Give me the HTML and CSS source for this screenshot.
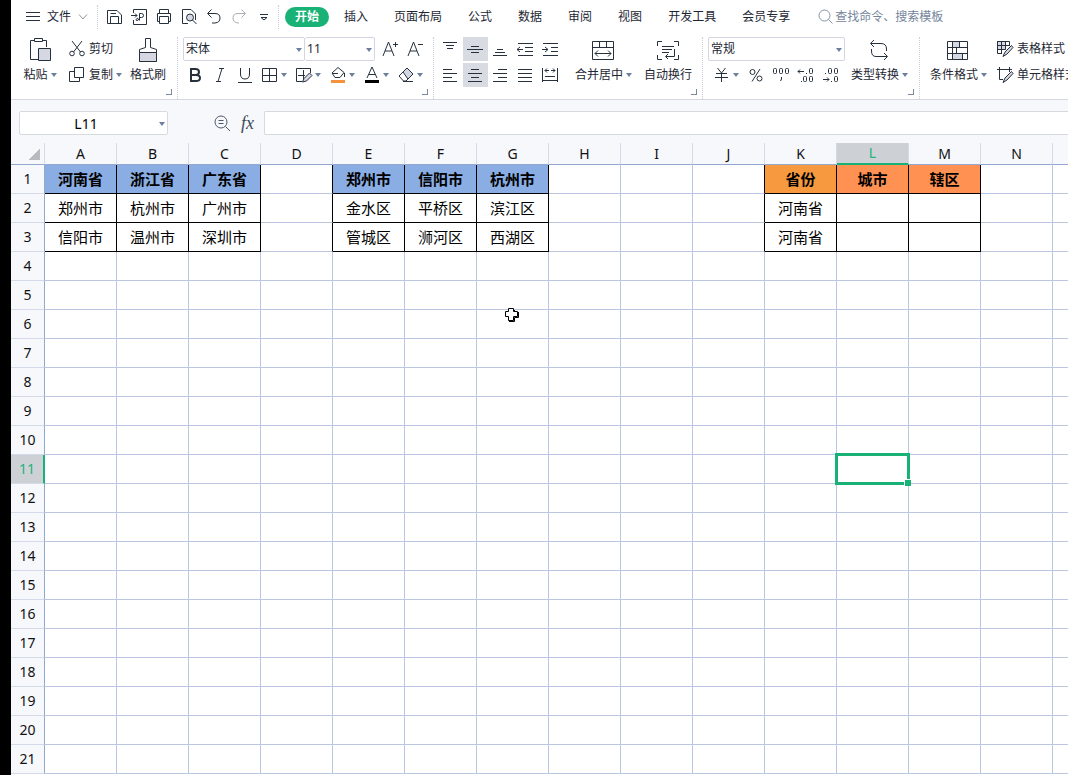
FILE: index.html
```html
<!DOCTYPE html>
<html lang="zh-CN">
<head>
<meta charset="utf-8">
<title>L11</title>
<link rel="stylesheet" href="styles.css">
</head>
<body>
<div class="app">
  <header class="menubar">
    <button class="file"><svg class="ic" width="14" height="15"><path d="M0 3.500H14M0 7.500H14M0 11.500H14"/></svg>文件<svg class="ic soft" width="10" height="8"><path d="M1 1.500L5 6L9 1.500"/></svg></button>
    <div class="quick">
      <button aria-label="保存"><svg class="ic" width="16" height="16"><path d="M1.500 1.500H11L15.500 6V14.500H1.500ZM4.500 14.500V7.500H12.500V14.500M4.500 4.500H10"/></svg></button>
      <button aria-label="输出PDF"><svg class="ic" width="16" height="16"><path d="M2.500 4V.500H15.500V15.500H2.500V11M0 6.500H6M4 4.500L6 6.500L4 8.500M8.500 11.500V4.500H10.500Q12.500 4.500 12.500 6.500T10.500 8.500H8.500M8.500 9Q7.500 12 5.500 11.500T7 9"/></svg></button>
      <button aria-label="打印"><svg class="ic" width="16" height="16"><path d="M3.500 4V.500H12.500V4M3.500 12.500H1.500V4.500H14.500V12.500H12.500M3.500 7.500H12.500V14.500H3.500Z"/></svg></button>
      <button aria-label="打印预览"><svg class="ic" width="16" height="16"><path d="M7 14.500H1.500V.500H10L14.500 5V11"/><circle class="shade" cx="9" cy="8.500" r="3.500"/><path d="M11.500 11L15.500 15"/></svg></button>
      <button aria-label="撤销"><svg class="ic" width="16" height="16"><path d="M5.500 .500L1.500 4.500L5.500 8.500M2 4.500H9Q14 4.500 14 9T9 14H6"/></svg></button>
      <button aria-label="恢复"><svg class="ic pale" width="16" height="16"><path d="M10.500 .500L14.500 4.500L10.500 8.500M14 4.500H7Q2 4.500 2 9T7 14H8"/></svg></button>
      <button aria-label="更多"><svg class="ic" width="16" height="16"><path d="M4 5.500H12M5 8.500L8 11L11 8.500Z"/></svg></button>
    </div>
    <nav class="tabs">
      <button class="tab on">开始</button><button class="tab">插入</button><button class="tab">页面布局</button><button class="tab">公式</button><button class="tab">数据</button><button class="tab">审阅</button><button class="tab">视图</button><button class="tab">开发工具</button><button class="tab">会员专享</button>
    </nav>
    <label class="search"><svg class="ic" width="15" height="15"><circle cx="6.500" cy="6.500" r="5.500"/><path d="M10.500 10.500L14.500 14.500"/></svg><input type="text" aria-label="查找" placeholder="查找命令、搜索模板"></label>
  </header>

  <div class="ribbon">
    <section class="group clip corner">
      <button class="big paste"><span class="pic"><svg class="ic" width="22" height="24"><path d="M5 2.500H1.500V21.500H9M13 2.500H17.500V9"/><path d="M5.500 .500H13.500V3.500H5.500Z"/><path class="shade" d="M9.500 10.500H21.500V22.500H9.500Z"/></svg></span><span class="cap">粘贴<i class="arr"></i></span></button>
      <div class="stack">
        <button class="line"><svg class="ic" width="16" height="16"><circle cx="3" cy="12.500" r="2.300"/><circle cx="13" cy="12.500" r="2.300"/><path d="M4.500 11L13 0M11.500 11L3 0"/></svg>剪切</button>
        <button class="line"><svg class="ic" width="16" height="16"><path d="M5.500 .500H14.500V10.500H5.500ZM5 4.500H.500V14.500H10.500V11"/></svg>复制<i class="arr"></i></button>
      </div>
      <button class="big"><span class="pic"><svg class="ic" width="20" height="24"><path d="M7.500 .500H12.500V9.500L18.500 11.500V23.500H1.500V11.500L7.500 9.500Z"/><path class="shade" d="M1.500 14.500H18.500V23.500H1.500Z"/></svg></span><span class="cap">格式刷</span></button>
    </section>

    <section class="group font corner">
      <div class="stack">
        <div class="row">
          <span class="combo family"><select aria-label="字体"><option>宋体</option></select></span><span class="combo size"><select aria-label="字号"><option>11</option></select></span>
          <button class="tool" aria-label="增大字号"><svg class="ic" width="16" height="18"><path d="M1 16L6.500 2L12 16M3 11H10M11 4.500H16M13.500 2V7"/></svg></button><button class="tool" aria-label="减小字号"><svg class="ic" width="16" height="18"><path d="M1 16L6.500 2L12 16M3 11H10M11 4.500H16"/></svg></button>
        </div>
        <div class="row">
          <button class="tool" aria-label="加粗"><svg class="ic heavy" width="14" height="16"><path d="M3 2H7.500Q11 2 11 5T7.500 8H3ZM3 8H8Q12 8 12 11T8 14H3Z"/></svg></button><button class="tool" aria-label="倾斜"><svg class="ic" width="14" height="16"><path d="M6 1.500H11M3 14.500H8M9 1.500L5 14.500"/></svg></button><button class="tool" aria-label="下划线"><svg class="ic" width="16" height="16"><path d="M3.500 1V7Q3.500 12 8 12T12.500 7V1M1 15.500H15"/></svg></button>
          <button class="tool split" aria-label="边框"><svg class="ic" width="16" height="16"><path d="M.500 1.500H14.500V14.500H.500ZM7.500 1.500V14.500M.500 8.500H14.500"/></svg><i class="arr"></i></button>
          <button class="tool split" aria-label="绘制表格"><svg class="ic" width="16" height="16"><path d="M14.500 6V1.500H.500V14.500H6M2 8.500H9M7.500 3V13" /><path class="shade" d="M6.500 15L8 11.500L13.500 6L16 8.500L10.500 14Z"/></svg><i class="arr"></i></button>
          <button class="tool split" aria-label="填充颜色"><svg class="ic" width="16" height="16"><path d="M2 6L8 .500L14 5.500L10 10.500H5ZM2 6.500H8M14.500 6V10"/><path class="swatch" d="M1 13H15V16H1Z"/></svg><i class="arr"></i></button>
          <button class="tool split" aria-label="字体颜色"><svg class="ic" width="16" height="16"><path d="M3 11L8 0L13 11M5 7.500H11"/><path class="ink" d="M1 13H15V16H1Z"/></svg><i class="arr"></i></button>
          <button class="tool split" aria-label="清除"><svg class="ic" width="16" height="16"><path class="shade" d="M5 5L9 1L15 7L10 12Z"/><path d="M5 5L1 9L5.500 14H8L10 12M5 14.500H15"/></svg><i class="arr"></i></button>
        </div>
      </div>
    </section>

    <section class="group align corner">
      <div class="stack">
        <div class="row">
          <button class="tool" aria-label="顶端对齐"><svg class="ic" width="16" height="16"><path d="M1 1.500H15M4 4.500H12M5 7.500H11"/></svg></button><button class="tool on" aria-label="垂直居中"><svg class="ic" width="16" height="16"><path d="M4 5.500H12M0 8.500H16M4 11.500H12"/></svg></button><button class="tool" aria-label="底端对齐"><svg class="ic" width="16" height="16"><path d="M5 8.500H11M3 11.500H13M1 14.500H15"/></svg></button><button class="tool" aria-label="减少缩进"><svg class="ic" width="16" height="16"><path d="M1 2.500H16M8 6.500H16M8 10.500H16M1 14.500H16M0 8.500H6M3 6L0 8.500L3 11"/></svg></button><button class="tool" aria-label="增加缩进"><svg class="ic" width="16" height="16"><path d="M1 2.500H16M9 6.500H16M9 10.500H16M1 14.500H16M0 8.500H6M3 6L6 8.500L3 11"/></svg></button>
        </div>
        <div class="row">
          <button class="tool" aria-label="左对齐"><svg class="ic" width="16" height="16"><path d="M1 2.500H10M1 6.500H15M1 10.500H10M1 14.500H15"/></svg></button><button class="tool on" aria-label="水平居中"><svg class="ic" width="16" height="16"><path d="M4 2.500H12M1 6.500H15M4 10.500H12M1 14.500H15"/></svg></button><button class="tool" aria-label="右对齐"><svg class="ic" width="16" height="16"><path d="M6 2.500H15M1 6.500H15M6 10.500H15M1 14.500H15"/></svg></button><button class="tool" aria-label="两端对齐"><svg class="ic" width="16" height="16"><path d="M1 2.500H15M1 6.500H15M1 10.500H15M1 14.500H15"/></svg></button><button class="tool" aria-label="分散对齐"><svg class="ic" width="16" height="16"><path d="M.500 1V15M15.500 1V15M3 3.500H7M9 3.500H13M5 1.500L3 3.500L5 5.500M11 1.500L13 3.500L11 5.500M3 9.500H13M1 13.500H15"/></svg></button>
        </div>
      </div>
      <button class="big"><span class="pic"><svg class="ic" width="23" height="20"><path d="M.500 1.500H21.500V19.500H.500ZM.500 7.500H21.500M7.500 1.500V7.500M14.500 1.500V7.500M3 13.500H19M6 10.500L3 13.500L6 16.500M16 10.500L19 13.500L16 16.500"/></svg></span><span class="cap">合并居中<i class="arr"></i></span></button>
      <button class="big"><span class="pic"><svg class="ic" width="22" height="20"><path d="M5 1.500H.500V6M17 1.500H21.500V6M.500 15V19.500H5M21.500 15V19.500H17M5 6.500H17M5 9.500H15M5 12.500H12M17.500 9V16.500H9M11 14L8.500 16.500L11 19"/></svg></span><span class="cap">自动换行</span></button>
    </section>

    <section class="group number corner">
      <div class="stack">
        <span class="combo format"><select aria-label="数字格式"><option>常规</option></select></span>
        <div class="row nums">
          <button class="tool split" aria-label="货币"><svg class="ic" width="16" height="16"><path d="M3.500 1L7.500 6L11.500 1M2 6.500H13M1 10.500H14M7.500 6V15"/></svg><i class="arr"></i></button><button class="tool" aria-label="百分比"><svg class="ic" width="14" height="16"><circle cx="3.500" cy="5" r="2.500"/><circle cx="10.500" cy="11.500" r="2.500"/><path d="M11 2L3 14.500"/></svg></button><button class="tool" aria-label="千位分隔"><svg class="ic" width="18" height="16"><rect x="1.500" y="1.500" width="3" height="5" rx="1"/><rect x="7.500" y="1.500" width="3" height="5" rx="1"/><rect x="13.500" y="1.500" width="3" height="5" rx="1"/><path d="M9.500 10V12L8.500 14"/></svg></button><button class="tool" aria-label="增加小数位"><svg class="ic" width="18" height="16"><path d="M1 4.500H7M3 2.500L1 4.500L3 6.500M9 6.500H10M4 14.500H5"/><rect x="12.500" y="1.500" width="3" height="5" rx="1"/><rect x="6.500" y="9.500" width="3" height="5" rx="1"/><rect x="12.500" y="9.500" width="3" height="5" rx="1"/></svg></button><button class="tool" aria-label="减少小数位"><svg class="ic" width="18" height="16"><path d="M1 12.500H7M5 10.500L7 12.500L5 14.500M9 14.500H10M3 6.500H4"/><rect x="12.500" y="9.500" width="3" height="5" rx="1"/><rect x="6.500" y="1.500" width="3" height="5" rx="1"/><rect x="12.500" y="1.500" width="3" height="5" rx="1"/></svg></button>
        </div>
      </div>
      <button class="big"><span class="pic"><svg class="ic" width="21" height="22"><path d="M5 1L1.500 4.500L5 8M2 4.500H12Q17.500 4.500 17.500 10V12M15 14L18.500 17.500L15 21M18 17.500H7Q2.500 17.500 2.500 12V10"/></svg></span><span class="cap">类型转换<i class="arr"></i></span></button>
    </section>

    <section class="group styles">
      <button class="big"><span class="pic"><svg class="ic" width="23" height="20"><path class="shade" d="M5.500 1.500H12.500V7.500H5.500ZM5.500 13.500H15.500V19.500H5.500Z"/><path d="M.500 1.500H20.500V19.500H.500ZM.500 7.500H20.500M.500 13.500H20.500M5.500 1.500V19.500M12.500 1.500V7.500M9.500 7.500V13.500M15.500 13.500V19.500"/></svg></span><span class="cap">条件格式<i class="arr"></i></span></button>
      <div class="stack">
        <button class="line"><svg class="ic" width="16" height="16"><path class="shade" d="M.500 .500H8.500V8.500H.500Z"/><path d="M.500 .500H12.500V5M.500 .500V12.500H5M.500 4.500H12.500M.500 8.500H8M4.500 .500V12.500M8.500 .500V8"/><path class="shade" d="M8 11L14.500 4.500L16 6.500L10 13L6 15.500Z"/></svg>表格样式</button>
        <button class="line"><svg class="ic" width="16" height="16"><path d="M0 2.500H15M2.500 0V12.500H6M12.500 0V5"/><path class="shade" d="M8 11L14.500 4.500L16 6.500L10 13L6 15.500Z"/></svg>单元格样式</button>
      </div>
    </section>
  </div>

  <div class="formula">
    <span class="namebox"><input type="text" aria-label="名称框" value="L11"></span>
    <button class="look" aria-label="浏览公式结果"><svg class="ic" width="17" height="17"><circle cx="7" cy="7" r="6"/><path d="M11.500 11.500L16 16M4.500 5.500H9.500M4.500 8.500H9.500"/></svg></button>
    <button class="fx">fx</button>
    <input class="edit" type="text" aria-label="编辑栏">
  </div>

  <main class="sheet">
    <table class="grid">
      <colgroup><col class="rowcol"><col class="c" span="14"><col></colgroup>
      <thead><tr><th class="all"></th><th>A</th><th>B</th><th>C</th><th>D</th><th>E</th><th>F</th><th>G</th><th>H</th><th>I</th><th>J</th><th>K</th><th class="cur">L</th><th>M</th><th>N</th><th></th></tr></thead>
      <tbody>
        <tr><th>1</th><td class="k blue">河南省</td><td class="k blue">浙江省</td><td class="k blue">广东省</td><td class="edge"></td><td class="k blue">郑州市</td><td class="k blue">信阳市</td><td class="k blue">杭州市</td><td></td><td></td><td class="edge"></td><td class="k gold">省份</td><td class="k orange">城市</td><td class="k orange">辖区</td><td></td><td></td></tr>
        <tr><th>2</th><td class="k">郑州市</td><td class="k">杭州市</td><td class="k">广州市</td><td class="edge"></td><td class="k">金水区</td><td class="k">平桥区</td><td class="k">滨江区</td><td></td><td></td><td class="edge"></td><td class="k">河南省</td><td class="k"></td><td class="k"></td><td></td><td></td></tr>
        <tr><th>3</th><td class="k">信阳市</td><td class="k">温州市</td><td class="k">深圳市</td><td class="edge"></td><td class="k">管城区</td><td class="k">浉河区</td><td class="k">西湖区</td><td></td><td></td><td class="edge"></td><td class="k">河南省</td><td class="k"></td><td class="k"></td><td></td><td></td></tr>
        <tr><th>4<td><td><td><td><td><td><td><td><td><td><td><td><td><td><td></tr>
        <tr><th>5<td><td><td><td><td><td><td><td><td><td><td><td><td><td><td></tr>
        <tr><th>6<td><td><td><td><td><td><td class="host"><svg class="pointer" width="15" height="15"><path d="M4.500 1.500H9.500V4.500H13.500V9.500H9.500V13.500H4.500V9.500H1.500V4.500H4.500Z"/><path d="M10.500 3V4M14.500 5V10.500H10.500V14.500H5"/></svg><td><td><td><td><td><td><td><td></tr>
        <tr><th>7<td><td><td><td><td><td><td><td><td><td><td><td><td><td><td></tr>
        <tr><th>8<td><td><td><td><td><td><td><td><td><td><td><td><td><td><td></tr>
        <tr><th>9<td><td><td><td><td><td><td><td><td><td><td><td><td><td><td></tr>
        <tr><th>10<td><td><td><td><td><td><td><td><td><td><td><td><td><td><td></tr>
        <tr><th class="cur">11<td><td><td><td><td><td><td><td><td><td><td><td class="host"><span class="selection"></span><td><td><td></tr>
        <tr><th>12<td><td><td><td><td><td><td><td><td><td><td><td><td><td><td></tr>
        <tr><th>13<td><td><td><td><td><td><td><td><td><td><td><td><td><td><td></tr>
        <tr><th>14<td><td><td><td><td><td><td><td><td><td><td><td><td><td><td></tr>
        <tr><th>15<td><td><td><td><td><td><td><td><td><td><td><td><td><td><td></tr>
        <tr><th>16<td><td><td><td><td><td><td><td><td><td><td><td><td><td><td></tr>
        <tr><th>17<td><td><td><td><td><td><td><td><td><td><td><td><td><td><td></tr>
        <tr><th>18<td><td><td><td><td><td><td><td><td><td><td><td><td><td><td></tr>
        <tr><th>19<td><td><td><td><td><td><td><td><td><td><td><td><td><td><td></tr>
        <tr><th>20<td><td><td><td><td><td><td><td><td><td><td><td><td><td><td></tr>
        <tr><th>21<td><td><td><td><td><td><td><td><td><td><td><td><td><td><td></tr>
      </tbody>
    </table>
  </main>
</div>
</body>
</html>
```
FILE: styles.css
```css
* { box-sizing: border-box; }
body {
  margin: 0;
  background: #fff;
  color: #1d2733;
  font: 12px/20px "Noto Sans", "Noto Sans CJK SC", sans-serif;
}
button, input, select {
  margin: 0;
  padding: 0;
  border: 0;
  background: none;
  color: inherit;
  font: inherit;
}
button { flex: none; white-space: nowrap; }
.app {
  min-height: 100vh;
  border-left: 11px solid #000;
  overflow: hidden;
}

/* icons */
.ic { display: block; flex: none; overflow: visible; fill: none; stroke: #26313d; stroke-width: 1; }
.ic .shade { fill: #d5d8e2; }
.ic .swatch { fill: #f5923e; stroke: none; }
.ic .ink { fill: #000; stroke: none; }
.ic.heavy { stroke-width: 2; }
.ic.pale { stroke: #a9afb5; }
.ic.soft { stroke: #8c9a94; }
.arr {
  flex: none;
  width: 6px;
  margin-left: 3px;
  border: 3px solid transparent;
  border-top: 4px solid #6c7f9d;
  border-bottom: 0;
}

/* menu bar */
.menubar { display: flex; align-items: center; height: 33px; padding-left: 15px; }
.file { display: flex; align-items: center; gap: 7px; padding-right: 9px; }
.quick {
  display: flex;
  height: 24px;
  padding: 0 1px 0 4px;
  border: dotted #c9ccdb;
  border-width: 0 1px;
}
.quick button { display: flex; align-items: center; justify-content: center; width: 25px; padding-right: 1px; }
.tabs { display: flex; margin-left: 6px; }
.tab { padding: 0 13px; }
.tab.on { margin-right: 2px; padding: 0 10px; border-radius: 10px; background: #18b277; color: #fff; font-weight: 700; }
.search { display: flex; align-items: center; gap: 2px; margin-left: 15px; }
.search .ic { stroke: #8493a6; }
.search input { width: 120px; }
.search input::placeholder { color: #75859b; opacity: 1; }

/* ribbon */
.ribbon { display: flex; height: 67px; padding-top: 4px; border-bottom: 1px solid #d6d7df; }
.group { display: flex; flex: none; position: relative; border-right: 1px dotted #c9ccdb; }
.corner::after {
  content: "";
  position: absolute;
  right: 5px;
  bottom: 4px;
  width: 5px;
  height: 5px;
  border: solid #7b899b;
  border-width: 0 1px 1px 0;
}
.clip { gap: 8px; padding: 0 11px 0 8px; }
.font { padding: 0 5px; }
.align { gap: 12px; padding: 0 10px 0 4px; }
.number { gap: 6px; padding: 0 11px 0 5px; }
.styles { gap: 10px; padding-left: 10px; border-right: 0; }
.stack { display: flex; flex-direction: column; gap: 2px; }
.row { display: flex; height: 24px; }
.nums { padding-left: 2px; }
.big { display: flex; flex-direction: column; align-items: center; height: 50px; }
.paste { width: 42px; }
.pic { display: flex; align-items: center; height: 28px; }
.cap { display: flex; align-items: center; height: 24px; }
.line { display: flex; align-items: center; height: 24px; }
.line .ic { margin-right: 4px; }
.tool { display: flex; align-items: center; justify-content: center; width: 25px; height: 24px; padding-right: 1px; }
.tool.on { background: #d8dbe2; }
.split { width: 34px; }
.combo { display: block; position: relative; height: 24px; border: 1px solid #d3d5e2; border-radius: 2px; }
.combo select { width: 100%; height: 22px; padding-left: 2px; appearance: none; }
.combo::after, .namebox::after {
  content: "";
  position: absolute;
  right: 2px;
  top: 10px;
  border: 3px solid transparent;
  border-top: 4px solid #6c7f9d;
  border-bottom: 0;
}
.family { width: 122px; }
.size { width: 70px; margin-right: 3px; border-left: 0; }
.format { width: 137px; }

/* formula bar */
.formula { display: flex; align-items: center; height: 43px; padding: 3px 0 0 8px; background: #f7f8fc; }
.namebox { position: relative; width: 149px; height: 24px; margin-right: 46px; border: 1px solid #d6dade; border-radius: 2px; background: #fff; }
.namebox input { width: 100%; height: 22px; padding-right: 15px; color: #000; font-size: 14px; text-align: center; }
.look { width: 17px; }
.look .ic { stroke: #4d5b6b; }
.fx { width: 33px; margin-right: 0; color: #3d4a58; font: italic 18px/20px "Liberation Serif", serif; }
.edit { flex: 1; height: 24px; border: 1px solid #d6dade; border-right: 0; border-radius: 2px 0 0 2px; background: #fff; }

/* sheet */
.grid { width: 100%; min-width: 1057px; table-layout: fixed; border-collapse: separate; border-spacing: 0; }
.rowcol { width: 34px; }
.c { width: 72px; }
.grid th, .grid td { height: 29px; padding: 0; border: solid #bcc6e1; border-width: 0 1px 1px 0; text-align: center; }
.grid th { background: #f7f8fc; border-bottom-color: #d5daea; border-right-color: #93a7d0; color: #111; font-size: 14px; font-weight: 400; }
.grid thead th { height: 22px; border-right-color: #d5daea; border-bottom-color: #93a7d0; }
.grid td { font: 400 15px/20px "Noto Sans CJK SC", sans-serif; color: #000; }
.grid thead .all { background: linear-gradient(135deg, transparent 50%, #b9bac0 50%) 18px 6px / 11px 11px no-repeat #f7f8fc; }
.grid th.cur { background: #cdd1d6; color: #25b27d; border-right: 2px solid #18b277; }
.grid thead th.cur { border-right: 1px solid #d5daea; border-bottom: 2px solid #18b277; }
.grid tr > :last-child { border-right: 0; }
.grid td.k { border-color: #000; }
.grid td.edge { border-right-color: #000; }
.grid td.blue, .grid td.gold, .grid td.orange { font-weight: 700; }
.grid td.blue { background: #8aade3; }
.grid td.gold { background: #f7993f; }
.grid td.orange { background: #ff9152; }
.grid td.host { position: relative; }
.selection { position: absolute; inset: -2px; border: 3px solid #18b277; }
.selection::after {
  content: "";
  position: absolute;
  right: -4px;
  bottom: -4px;
  width: 6px;
  height: 6px;
  border: solid #fff;
  border-width: 1px 0 0 1px;
  background: #18b277;
}
.pointer { position: absolute; left: 27px; top: -3px; fill: #fff; stroke: #000; }
.pointer path + path { fill: none; }
```
